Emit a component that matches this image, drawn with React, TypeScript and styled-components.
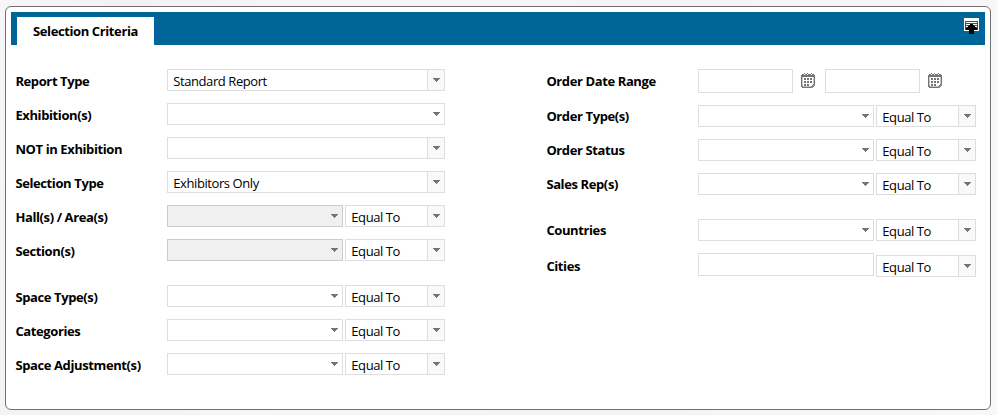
import React from "react";
import styled, { createGlobalStyle, css } from "styled-components";

const GlobalStyle = createGlobalStyle`
  *, *::before, *::after { box-sizing: border-box; }
  html, body { margin: 0; height: 100%; }
  body {
    background: linear-gradient(100deg, #f6f6f6 0%, #f2f2f2 12%, #f6f6f6 30%, #f4f4f4 65%, #f8f8f8 100%);
    font-family: "Open Sans", "Noto Sans", sans-serif;
    font-size: 13px;
    color: #000;
    overflow: hidden;
  }
`;

const boldText = css`
  font-weight: 700;
  letter-spacing: -0.39px;
  white-space: nowrap;
`;

const Page = styled.main`
  height: 415px;
  padding: 6px 6px 5px 5px;
`;

const Panel = styled.section`
  height: 404px;
  padding: 5px;
  background: #fff;
  border: 1px solid #707070;
  border-radius: 6px;
`;

const Header = styled.header`
  display: flex;
  justify-content: space-between;
  height: 33px;
  padding: 5px 6px 0;
  background: #006699;
`;

const Tab = styled.div`
  width: 137px;
  height: 28px;
  padding-left: 16px;
  background: #fff;
  line-height: 28px;
  ${boldText}
`;

const IconButton = styled.button`
  display: block;
  width: 15px;
  height: 18px;
  margin-top: 1px;
  padding: 0;
  border: 0;
  background: none;

  svg { display: block; }
`;

const Columns = styled.div`
  display: grid;
  grid-template-columns: 531px 1fr;
  padding: 24px 0 0 4px;
`;

const Row = styled.div<{ $gap?: number }>`
  display: flex;
  align-items: flex-start;
  margin-top: ${(p) => p.$gap ?? 12}px;

  &:first-child { margin-top: 0; }
`;

const Label = styled.label<{ $lineHeight?: number }>`
  width: 152px;
  height: 22px;
  padding-left: 0.4px;
  line-height: ${(p) => p.$lineHeight ?? 24}px;
  ${boldText}
`;

const Fields = styled.div<{ $gap?: number }>`
  display: flex;
  align-items: flex-start;
  gap: ${(p) => p.$gap ?? 2}px;
`;

const ComboBox = styled.div<{ $width: number; $disabled?: boolean; $drop?: number }>`
  display: flex;
  width: ${(p) => p.$width}px;
  height: 22px;
  margin-top: ${(p) => p.$drop ?? 0}px;
  border: 1px solid ${(p) => (p.$disabled ? "#cccccc" : "#dedede")};
  background: ${(p) => (p.$disabled ? "#f0f0f0" : "#fff")};
`;

const Value = styled.span`
  flex: 1;
  padding-left: 5.3px;
  line-height: 23px;
  letter-spacing: -0.42px;
  white-space: nowrap;
`;

const Trigger = styled.span<{ $split?: boolean }>`
  width: 17px;
  padding: 8px 0 0 6px;
  ${(p) =>
    p.$split &&
    css`
      padding-left: 5px;
      border-left: 1px solid #dedede;
      background: #f9f9f9;
    `}

  svg { display: block; }
`;

const TextBox = styled.input<{ $width: number; $height: number }>`
  width: ${(p) => p.$width}px;
  height: ${(p) => p.$height}px;
  padding: 0 5px;
  border: 1px solid #dedede;
  background: #fff;
  font: inherit;
  outline: none;
`;

const DateField = styled.div`
  display: flex;
  gap: 8px;
  width: 127px;

  svg { display: block; margin-top: 4px; }
`;

function Arrow() {
  return (
    <svg width="7" height="4" viewBox="0 0 7 4" shapeRendering="crispEdges" fill="#747474">
      <path d="M0 0h7v1h-1v1h-1v1h-1v1h-1v-1h-1v-1h-1v-1h-1z" />
    </svg>
  );
}

function CalendarIcon() {
  return (
    <svg width="14" height="15" viewBox="0 0 14 15" shapeRendering="crispEdges" fill="#747474">
      <path d="M3 0h1v1H3zM6 0h1v1H6zM10 0h1v1h-1zM1 1h12v1H1zM0 2h14v2H0zM0 4h1v10H0zM13 4h1v7h-1zM1 14h9v1H1z" />
      <path d="M3 1h1v1H3zM6 1h1v1H6zM10 1h1v1h-1z" fill="#fff" />
      <path d="M1 4h1v9H1zM12 4h1v7h-1zM2 13h8v1H2z" fill="#c4c4c4" />
      <path d="M1 13h1v1H1zM12 11h1v1h-1zM11 12h1v1h-1zM10 13h1v1h-1z" />
      <path d="M13 11h1v2h-1zM12 12h1v2h-1zM11 13h1v2h-1zM10 14h1v1h-1z" fill="#909090" />
      <path d="M3 5h2v2H3zM6 5h2v2H6zM9 5h2v2H9zM3 8h2v2H3zM6 8h2v2H6zM9 8h2v2H9zM3 11h2v2H3zM6 11h2v2H6z" />
    </svg>
  );
}

function CollapseIcon() {
  return (
    <svg width="15" height="18" viewBox="0 0 15 18" shapeRendering="crispEdges">
      <path d="M0 0h15v13H0z" fill="#fff" />
      <path d="M2 3h11v1H2zM2 5h11v1H2zM2 7h11v1H2zM2 9h11v1H2zM2 11h11v1H2zM1 3h1v9H1zM13 3h1v9h-1z" fill="#006699" />
      <path d="M6 6h3v1h1v1h1v1h1v1h1v2h-3v4H5v-4H2v-2h1V9h1V8h1V7h1z" fill="#000" />
    </svg>
  );
}

type ComboProps = { width: number; value?: string; split?: boolean; disabled?: boolean; drop?: number };

function Combo({ width, value, split, disabled, drop }: ComboProps) {
  return (
    <ComboBox $width={width} $disabled={disabled} $drop={drop}>
      <Value>{value}</Value>
      <Trigger $split={split}><Arrow /></Trigger>
    </ComboBox>
  );
}

type FilterProps = { label: string; gap?: number; disabled?: boolean; lineHeight?: number };

function FilterRow({ label, gap, disabled, lineHeight }: FilterProps) {
  return (
    <Row $gap={gap}>
      <Label $lineHeight={lineHeight}>{label}</Label>
      <Fields>
        <Combo width={176} disabled={disabled} />
        <Combo width={100} value="Equal To" split />
      </Fields>
    </Row>
  );
}

function SelectRow({ label, value, split = true }: { label: string; value?: string; split?: boolean }) {
  return (
    <Row>
      <Label>{label}</Label>
      <Combo width={278} value={value} split={split} />
    </Row>
  );
}

export default function App() {
  return (
    <>
      <GlobalStyle />
      <Page>
        <Panel>
          <Header>
            <Tab>Selection Criteria</Tab>
            <IconButton aria-label="Collapse"><CollapseIcon /></IconButton>
          </Header>
          <Columns>
            <div>
              <SelectRow label="Report Type" value="Standard Report" />
              <SelectRow label="Exhibition(s)" split={false} />
              <SelectRow label="NOT in Exhibition" />
              <SelectRow label="Selection Type" value="Exhibitors Only" />
              <FilterRow label="Hall(s) / Area(s)" disabled />
              <FilterRow label="Section(s)" disabled />
              <FilterRow label="Space Type(s)" gap={24} />
              <FilterRow label="Categories" />
              <FilterRow label="Space Adjustment(s)" />
            </div>
            <div>
              <Row>
                <Label>Order Date Range</Label>
                <Fields $gap={0}>
                  <DateField><TextBox $width={95} $height={24} /><CalendarIcon /></DateField>
                  <DateField><TextBox $width={95} $height={24} /><CalendarIcon /></DateField>
                </Fields>
              </Row>
              <FilterRow label="Order Type(s)" lineHeight={22} />
              <FilterRow label="Order Status" lineHeight={22} />
              <FilterRow label="Sales Rep(s)" lineHeight={22} />
              <FilterRow label="Countries" gap={24} lineHeight={22} />
              <Row>
                <Label $lineHeight={26}>Cities</Label>
                <Fields>
                  <TextBox $width={176} $height={23} />
                  <Combo width={100} value="Equal To" split drop={2} />
                </Fields>
              </Row>
            </div>
          </Columns>
        </Panel>
      </Page>
    </>
  );
}
